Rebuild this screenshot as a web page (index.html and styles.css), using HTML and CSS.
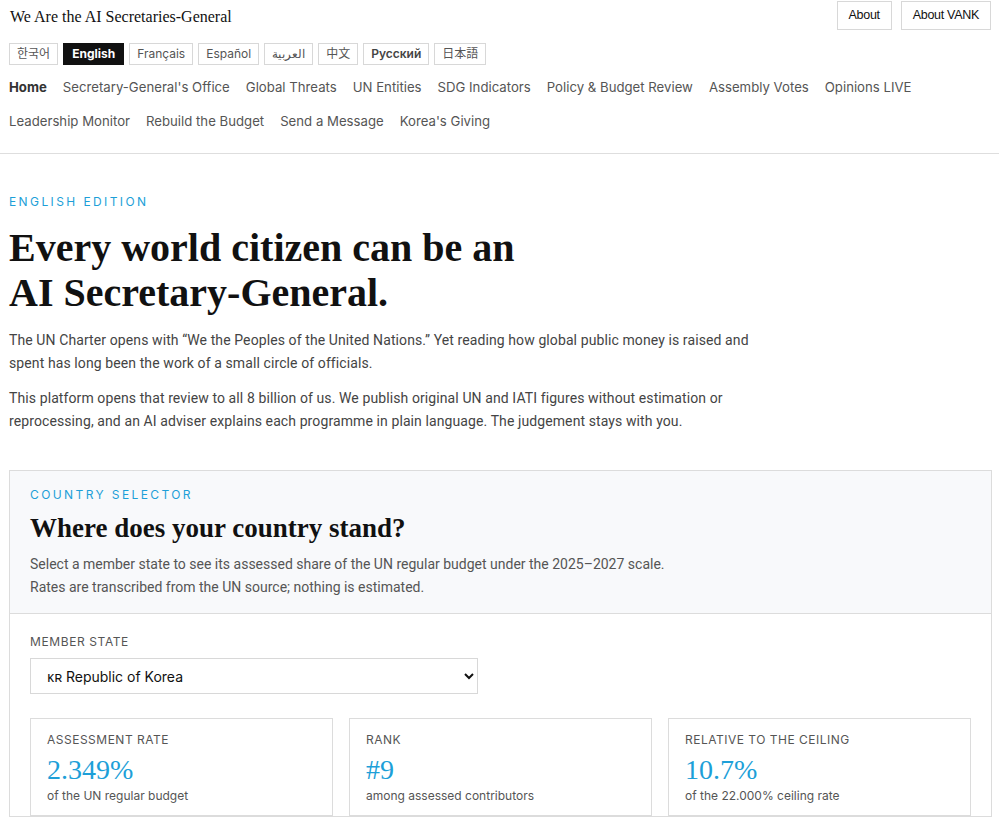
FILE: index.html
```html
<!DOCTYPE html>
<html lang="en">
<head>
<meta charset="utf-8">
<title>We Are the AI Secretaries-General</title>
<link rel="stylesheet" href="styles.css">
</head>
<body>
<header class="site-header">
  <div class="top-row">
    <div class="brand-col">
      <div class="brand">We Are the AI Secretaries-General</div>
      <div class="langs">
        <span class="lang">한국어</span>
        <span class="lang active">English</span>
        <span class="lang">Français</span>
        <span class="lang">Español</span>
        <span class="lang">العربية</span>
        <span class="lang">中文</span>
        <span class="lang bold">Русский</span>
        <span class="lang">日本語</span>
      </div>
    </div>
    <div class="about-btns">
      <span class="about-btn">About</span>
      <span class="about-btn">About VANK</span>
    </div>
  </div>
  <nav class="main-nav">
    <div class="nav-row">
      <a class="nav-item current">Home</a>
      <a class="nav-item">Secretary-General's Office</a>
      <a class="nav-item">Global Threats</a>
      <a class="nav-item">UN Entities</a>
      <a class="nav-item">SDG Indicators</a>
      <a class="nav-item">Policy &amp; Budget Review</a>
      <a class="nav-item">Assembly Votes</a>
      <a class="nav-item">Opinions LIVE</a>
    </div>
    <div class="nav-row">
      <a class="nav-item">Leadership Monitor</a>
      <a class="nav-item">Rebuild the Budget</a>
      <a class="nav-item">Send a Message</a>
      <a class="nav-item">Korea's Giving</a>
    </div>
  </nav>
</header>
<main class="content">
  <section class="hero">
    <div class="eyebrow">English Edition</div>
    <h1 class="hero-title">Every world citizen can be an<br>AI Secretary-General.</h1>
    <p class="lead">The UN Charter opens with “We the Peoples of the United Nations.” Yet reading how global public money is raised and spent has long been the work of a small circle of officials.</p>
    <p class="lead">This platform opens that review to all 8 billion of us. We publish original UN and IATI figures without estimation or reprocessing, and an AI adviser explains each programme in plain language. The judgement stays with you.</p>
  </section>
  <section class="selector">
    <div class="selector-head">
      <div class="eyebrow small">Country Selector</div>
      <h2 class="selector-title">Where does your country stand?</h2>
      <p class="selector-desc">Select a member state to see its assessed share of the UN regular budget under the 2025–2027 scale.<br>Rates are transcribed from the UN source; nothing is estimated.</p>
    </div>
    <div class="selector-body">
      <label class="field-label" for="ms">Member State</label>
      <select id="ms" class="ms-select">
        <option>ᴋʀ Republic of Korea</option>
      </select>
      <div class="stats">
        <div class="stat">
          <div class="stat-label">Assessment Rate</div>
          <div class="stat-value">2.349%</div>
          <div class="stat-sub">of the UN regular budget</div>
        </div>
        <div class="stat">
          <div class="stat-label">Rank</div>
          <div class="stat-value">#9</div>
          <div class="stat-sub">among assessed contributors</div>
        </div>
        <div class="stat">
          <div class="stat-label">Relative to the Ceiling</div>
          <div class="stat-value">10.7%</div>
          <div class="stat-sub">of the 22.000% ceiling rate</div>
        </div>
      </div>
    </div>
  </section>
</main>
</body>
</html>
```
FILE: styles.css
```css
* { box-sizing: border-box; }
html, body { margin: 0; padding: 0; background: #fff; }
body {
  font-family: Inter, "Noto Sans", sans-serif;
  color: #222;
  overflow: hidden;
}
.site-header {
  border-bottom: 1px solid #dedede;
  padding: 1px 8px 0 9px;
}
.top-row {
  display: flex;
  justify-content: space-between;
  align-items: flex-start;
}
.brand {
  font-family: "Liberation Serif", serif;
  font-size: 16px;
  color: #111;
  padding: 6px 0 0 1px;
  line-height: 20px;
}
.langs {
  display: flex;
  gap: 5px;
  margin-top: 16px;
}
.lang {
  display: inline-block;
  border: 1px solid #d8d8d8;
  font-size: 12px;
  line-height: 20px;
  padding: 0 7px;
  color: #555;
  font-family: Inter, "Noto Sans CJK KR", sans-serif;
}
.lang.active {
  background: #111;
  border-color: #111;
  color: #fff;
  font-weight: 700;
  padding: 0 8px;
}
.lang.bold { font-weight: 600; color: #444; }
.about-btns { display: flex; gap: 9px; }
.about-btn {
  border: 1px solid #d8d8d8;
  font-family: "Liberation Sans", Arial, sans-serif;
  font-size: 12.5px;
  letter-spacing: -0.3px;
  color: #111;
  line-height: 27px;
  padding: 0 11px;
}
.main-nav {
  padding: 5px 0 15px;
}
.nav-row {
  display: flex;
  column-gap: 16px;
}
.nav-item {
  font-size: 13.2px;
  color: #555;
  line-height: 34px;
  white-space: nowrap;
}
.nav-item.current { font-weight: 700; color: #333; }

.content { padding: 0 7px 0 9px; }
.hero { padding-top: 40px; }
.eyebrow {
  font-size: 12px;
  letter-spacing: 2.4px;
  text-transform: uppercase;
  color: #1d9fd8;
  line-height: 16px;
}
.hero-title {
  font-family: "Liberation Serif", serif;
  font-size: 40px;
  font-weight: 700;
  line-height: 45px;
  margin: 15px 0 14px;
  color: #111;
}
.lead {
  font-family: Roboto, "Noto Sans", sans-serif;
  font-size: 14px;
  letter-spacing: 0.1px;
  line-height: 23px;
  color: #444;
  margin: 0 0 12px;
  max-width: 760px;
}
.lead:last-child { margin-bottom: 0; }
.selector {
  margin-top: 37px;
  border: 1px solid #dcdcdc;
}
.selector-head {
  background: #f8f9fb;
  border-bottom: 1px solid #dcdcdc;
  padding: 16px 20px 14px;
}
.eyebrow.small { font-size: 12px; letter-spacing: 2.4px; }
.selector-title {
  font-family: "Liberation Serif", serif;
  font-size: 27px;
  font-weight: 700;
  line-height: 34px;
  margin: 8px 0 8px;
  color: #111;
}
.selector-desc {
  font-family: Roboto, "Noto Sans", sans-serif;
  font-size: 14px;
  line-height: 23px;
  color: #555;
  margin: 0;
}
.selector-body { padding: 20px 20px 0; }
.field-label {
  display: block;
  font-size: 12px;
  letter-spacing: 0.6px;
  text-transform: uppercase;
  color: #555;
  line-height: 16px;
}
.ms-select {
  display: block;
  margin-top: 8px;
  width: 448px;
  height: 36px;
  border: 1px solid #d8d8d8;
  background: #fff;
  font-family: Inter, "Noto Sans", sans-serif;
  font-size: 14px;
  color: #111;
  padding: 0 12px;
  border-radius: 0;
}
.stats {
  display: grid;
  grid-template-columns: repeat(3, 1fr);
  gap: 16px;
  margin-top: 24px;
}
.stat {
  border: 1px solid #dcdcdc;
  padding: 13px 16px 14px;
  height: 98px;
}
.stat-label {
  font-size: 12px;
  letter-spacing: 0.5px;
  text-transform: uppercase;
  color: #555;
  line-height: 16px;
}
.stat-value {
  font-family: "Liberation Serif", serif;
  font-size: 28px;
  color: #1d9fd8;
  line-height: 32px;
  margin-top: 6px;
}
.stat-sub {
  font-size: 12px;
  color: #555;
  line-height: 16px;
  margin-top: 2px;
}
```
